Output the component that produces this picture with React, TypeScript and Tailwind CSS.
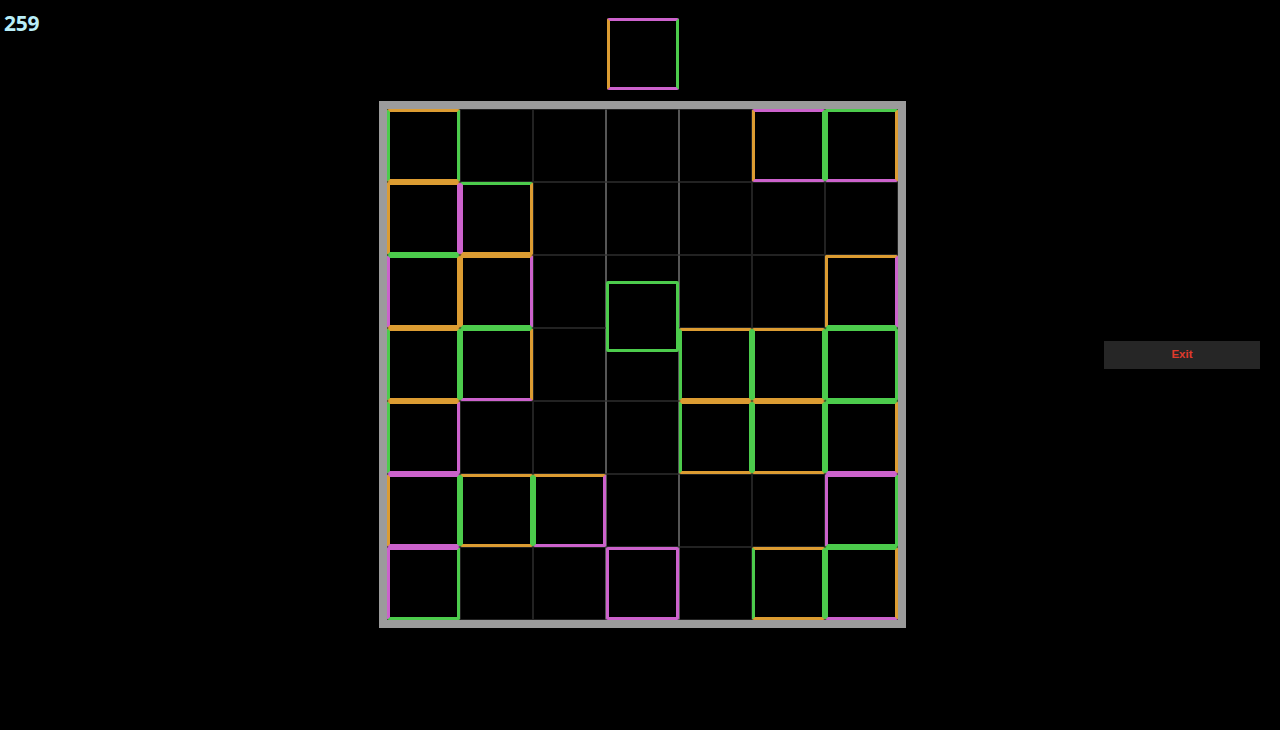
import React from "react";

type C = "O" | "G" | "P";

const TOP: Record<C, string> = {
  O: "border-t-[#dc9c32]",
  G: "border-t-[#4ccb4c]",
  P: "border-t-[#cc62cc]",
};
const RIGHT: Record<C, string> = {
  O: "border-r-[#dc9c32]",
  G: "border-r-[#4ccb4c]",
  P: "border-r-[#cc62cc]",
};
const BOTTOM: Record<C, string> = {
  O: "border-b-[#dc9c32]",
  G: "border-b-[#4ccb4c]",
  P: "border-b-[#cc62cc]",
};
const LEFT: Record<C, string> = {
  O: "border-l-[#dc9c32]",
  G: "border-l-[#4ccb4c]",
  P: "border-l-[#cc62cc]",
};

// [top, right, bottom, left]
const board: (string | null)[][] = [
  ["OGOG", null, null, null, null, "PGPO", "GOPG"],
  ["OPGO", "GOOP", null, null, null, null, null],
  ["GOOP", "OPGO", null, null, null, null, "OPGO"],
  ["OGOG", "GOPG", null, null, "OGOG", "OGOG", "GGGG"],
  ["OPPG", null, null, null, "OGOG", "OGOG", "GOPG"],
  ["PGPO", "OGOG", "OPPG", null, null, null, "PGGP"],
  ["PGGP", null, null, "PPPP", null, "OGOG", "GOPG"],
];

function Tile({ code, className = "w-[73px] h-[73px]" }: { code: string; className?: string }) {
  const [t, r, b, l] = code.split("") as C[];
  return (
    <div
      className={`border-[3px] rounded-[2px] bg-black ${TOP[t]} ${RIGHT[r]} ${BOTTOM[b]} ${LEFT[l]} ${className}`}
    />
  );
}

const COL_BORDER = [
  "border-[#222222]",
  "border-[#222222]",
  "border-[#222222] border-r-[#565656]",
  "border-[#222222] border-x-[#565656]",
  "border-[#222222] border-l-[#565656]",
  "border-[#222222]",
  "border-[#222222]",
];

export default function App() {
  return (
    <div className="flex h-[730px] w-full bg-black font-['Open_Sans',sans-serif] overflow-hidden">
      <div className="w-[379px] shrink-0 pl-[4px] pt-[8px]">
        <span className="text-[21px] font-bold text-[#b9eef8] tracking-[-0.3px]">259</span>
      </div>
      <div className="w-[527px] shrink-0 flex flex-col items-center pt-[18px]">
        <Tile code="PGPO" className="w-[72px] h-[72px]" />
        <div className="mt-[11px] border-[8px] border-[#9b9b9b] bg-black relative">
          <div className="grid grid-cols-[repeat(7,73px)] grid-rows-[repeat(7,73px)]">
            {board.map((row, ri) =>
              row.map((cell, ci) => (
                <div key={`${ri}-${ci}`} className={`w-[73px] h-[73px] border ${COL_BORDER[ci]}`}>
                  {cell ? <Tile code={cell} className="w-[73px] h-[73px] -m-px" /> : null}
                </div>
              ))
            )}
          </div>
          <Tile code="GGGG" className="absolute left-[219px] top-[172px] w-[73px] h-[71px]" />
        </div>
      </div>
      <div className="pl-[198px] pt-[340px]">
        <button className="w-[156px] h-[28px] bg-[#262626] text-[#e03a2c] text-[11.5px] font-bold font-['Liberation_Sans',sans-serif]">
          Exit
        </button>
      </div>
    </div>
  );
}
